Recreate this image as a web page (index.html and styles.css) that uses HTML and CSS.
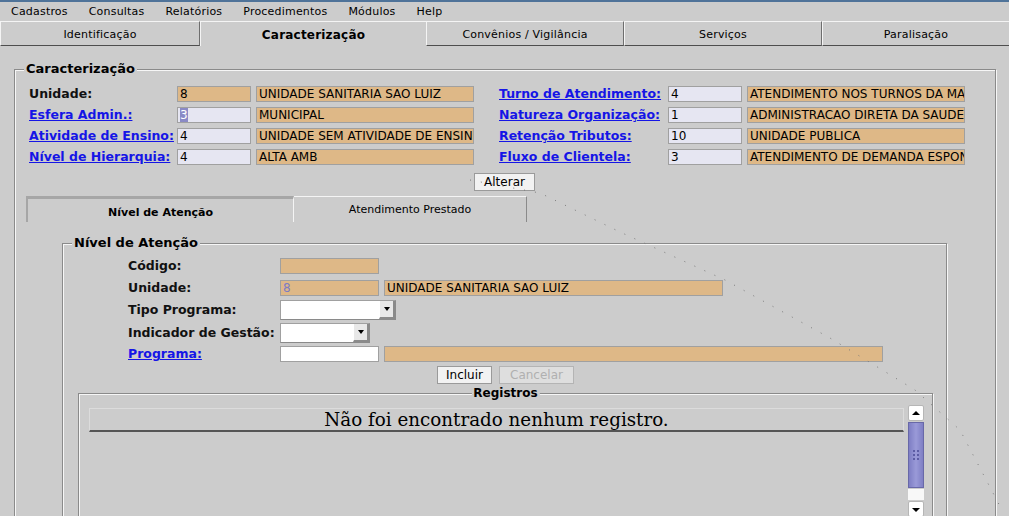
FILE: index.html
```html
<!DOCTYPE html>
<html lang="pt">
<head>
<meta charset="utf-8">
<title>Caracterização</title>
<link rel="stylesheet" href="styles.css">
</head>
<body>
<div class="topstrip"></div>
<nav class="menubar">
  <span>Cadastros</span><span>Consultas</span><span>Relatórios</span><span>Procedimentos</span><span>Módulos</span><span>Help</span>
</nav>
<div class="tabs">
  <div class="tab">Identificação</div>
  <div class="tab active">Caracterização</div>
  <div class="tab">Convênios / Vigilância</div>
  <div class="tab">Serviços</div>
  <div class="tab last">Paralisação</div>
</div>
<div class="main">
  <section class="group car">
    <span class="legend">Caracterização</span>
    <div class="cgrid">
      <span class="lbl">Unidade:</span><span class="fld tan">8</span><span class="fld tan">UNIDADE SANITARIA SAO LUIZ</span><span></span>
      <a class="lbl link">Turno de Atendimento:</a><span class="fld lav">4</span><span class="fld tan">ATENDIMENTO NOS TURNOS DA MANHA E A TARDE</span>

      <a class="lbl link">Esfera Admin.:</a><span class="fld lav"><span class="sel">3</span></span><span class="fld tan">MUNICIPAL</span><span></span>
      <a class="lbl link">Natureza Organização:</a><span class="fld lav">1</span><span class="fld tan">ADMINISTRACAO DIRETA DA SAUDE (MS, SES E SMS)</span>

      <a class="lbl link">Atividade de Ensino:</a><span class="fld lav">4</span><span class="fld tan">UNIDADE SEM ATIVIDADE DE ENSINO</span><span></span>
      <a class="lbl link">Retenção Tributos:</a><span class="fld lav">10</span><span class="fld tan">UNIDADE PUBLICA</span>

      <a class="lbl link">Nível de Hierarquia:</a><span class="fld lav">4</span><span class="fld tan">ALTA AMB</span><span></span>
      <a class="lbl link">Fluxo de Clientela:</a><span class="fld lav">3</span><span class="fld tan">ATENDIMENTO DE DEMANDA ESPONTANEA</span>
    </div>
    <div class="center"><button class="btn alt">Alterar</button></div>
    <div class="subtabs">
      <div class="stab active">Nível de Atenção</div>
      <div class="stab">Atendimento Prestado</div>
    </div>
    <section class="group nivel">
      <span class="legend">Nível de Atenção</span>
      <div class="ngrid">
        <span class="lbl">Código:</span>
        <div class="frow"><span class="fld tan w99"></span></div>

        <span class="lbl">Unidade:</span>
        <div class="frow"><span class="fld tan w99 caret">8</span><span class="fld tan w339">UNIDADE SANITARIA SAO LUIZ</span></div>

        <span class="lbl tall">Tipo Programa:</span>
        <div class="frow"><span class="select w116"><span class="arrow"></span></span></div>

        <span class="lbl tall">Indicador de Gestão:</span>
        <div class="frow"><span class="select w90"><span class="arrow"></span></span></div>

        <a class="lbl link">Programa:</a>
        <div class="frow"><span class="fld white w99"></span><span class="fld tan w499"></span></div>
      </div>
      <div class="center btnrow">
        <button class="btn inc">Incluir</button>
        <button class="btn can" disabled>Cancelar</button>
      </div>
      <section class="group reg">
        <span class="legend regl">Registros</span>
        <div class="regbody">
          <div class="thead">Não foi encontrado nenhum registro.</div>
          <div class="scroll">
            <span class="sbtn up"></span>
            <span class="thumb"><span class="grip"></span></span>
            <span class="track"></span>
            <span class="sbtn down"></span>
          </div>
        </div>
      </section>
    </section>
  </section>
</div>
<svg class="trail" width="1009" height="516" viewBox="0 0 1009 516">
  <polyline points="470,180 540,193 620,232 725,280 830,338 915,390 960,430 1003,512" fill="none" stroke="#7a7a7a" stroke-width="1" stroke-dasharray="1 10"/>
</svg>
</body>
</html>
```

FILE: styles.css
```css
* { box-sizing: border-box; }
html, body { margin: 0; padding: 0; }
body {
  width: 1009px;
  height: 516px;
  overflow: hidden;
  background: #cccccc;
  font-family: "DejaVu Sans", "Liberation Sans", sans-serif;
  color: #000;
  position: relative;
}
.topstrip { height: 2px; background: #4f7399; }
.menubar {
  height: 19px;
  display: flex;
  align-items: center;
  gap: 21px;
  padding-left: 11px;
  font-size: 11px;
  letter-spacing: 0.2px;
}
.tabs {
  display: grid;
  grid-template-columns: 200px 226px 198px 198px 1fr;
  height: 25px;
}
.tab {
  display: flex;
  align-items: center;
  justify-content: center;
  font-size: 11px;
  letter-spacing: 0.2px;
  border-top: 1px solid #f4f4f4;
  border-left: 1px solid #f4f4f4;
  border-right: 1px solid #6e6e6e;
  border-bottom: 1px solid #4e4e4e;
  padding-top: 1px;
}
.tab.active {
  border-bottom: none;
  border-right: none;
  font-weight: bold;
  font-size: 12px;
}
.tab.last { border-right: none; }

.main { padding-left: 14px; padding-top: 23px; }

.group {
  position: relative;
  border: 1px solid #8a8a8a;
  box-shadow: inset 1px 1px 0 #f6f6f6, 1px 1px 0 #f6f6f6;
}
.legend {
  position: absolute;
  top: -9px;
  left: 9px;
  padding: 0 2px;
  background: #cccccc;
  font-weight: bold;
  font-size: 13px;
  line-height: 16px;
}
.car {
  width: 982px;
  height: 470px;
  padding: 16px 0 0 0;
}
.cgrid {
  margin-left: 14px;
  display: grid;
  grid-template-columns: 143px 74px 218px 15px 164px 74px 218px;
  grid-auto-rows: 16px;
  column-gap: 5px;
  row-gap: 5px;
}
.lbl {
  font-weight: bold;
  font-size: 12.5px;
  line-height: 16px;
  white-space: nowrap;
  color: #111;
}
.link { color: #1515e6; text-decoration: underline; cursor: pointer; }
.fld {
  display: block;
  height: 16px;
  border: 1px solid #a0a0a0;
  font-size: 12px;
  line-height: 14px;
  padding-left: 2px;
  white-space: nowrap;
  overflow: hidden;
}
.tan { background: #deb887; }
.lav { background: #e6e6f2; }
.white { background: #ffffff; }
.sel { background: #8a8ac6; color: #fff; }
.caret { color: #7b7bc4; }

.center { display: flex; justify-content: center; gap: 7px; }
.btn {
  font-family: "DejaVu Sans", sans-serif;
  font-size: 12px;
  height: 18px;
  padding: 0;
  background: #f2f2f2;
  border: 1px solid #9a9a9a;
  color: #000;
  line-height: 15px;
}
.alt { width: 61px; margin-top: 8px; margin-right: 1px; }
.btnrow { margin-top: 4px; padding-left: 2px; }
.inc { width: 55px; }
.can { width: 75px; color: #b0b0b0; background: #dedede; border-color: #b4b4b4; }

.subtabs {
  display: flex;
  margin: 5px 0 0 11px;
  height: 26px;
}
.stab {
  display: flex;
  align-items: center;
  justify-content: center;
  font-size: 11px;
  border-top: 1px solid #f4f4f4;
  border-right: 1px solid #8a8a8a;
  width: 233px;
}
.stab.active {
  width: 268px;
  font-weight: bold;
  border-top: 3px solid #a6a6a6;
  border-left: 2px solid #a6a6a6;
  border-right: 1px solid #f4f4f4;
  padding-top: 3px;
}

.nivel {
  margin: 21px 0 0 47px;
  width: 885px;
  height: 320px;
  padding: 14px 0 0 0;
}
.ngrid {
  margin-left: 65px;
  display: grid;
  grid-template-columns: 152px 1fr;
  grid-template-rows: 22px 20px 23px 23px 16px;
  align-items: start;
}
.ngrid .lbl { font-size: 12.5px; }
.ngrid .lbl.tall { line-height: 20px; }
.frow { display: flex; gap: 5px; }
.w99 { width: 99px; }
.w339 { width: 339px; }
.w499 { width: 499px; }
.w116 { width: 116px; }
.w90 { width: 90px; }
.select {
  display: flex;
  justify-content: flex-end;
  height: 20px;
  background: #ffffff;
  border-top: 1px solid #a0a0a0;
  border-left: 1px solid #a0a0a0;
  border-right: 1px solid #8a8a8a;
  border-bottom: 1px solid #8a8a8a;
}
.arrow {
  width: 16px;
  height: 18px;
  background: #e8e8e8;
  border-left: 1px solid #fff;
  border-right: 2px solid #8a8a8a;
  border-bottom: 2px solid #8a8a8a;
  position: relative;
}
.arrow::after {
  content: "";
  position: absolute;
  left: 4px;
  top: 6px;
  border-left: 3px solid transparent;
  border-right: 3px solid transparent;
  border-top: 4px solid #000;
}

.reg {
  margin: 9px 0 0 15px;
  width: 855px;
  height: 160px;
  padding: 14px 0 0 10px;
}
.regl {
  left: 50%;
  transform: translateX(-50%);
  font-size: 12px;
  line-height: 14px;
  top: -8px;
}
.regbody { display: flex; align-items: flex-start; gap: 4px; }
.thead {
  width: 815px;
  height: 24px;
  border-top: 1px solid #dcdcdc;
  border-left: 1px solid #dcdcdc;
  border-right: 1px solid #dcdcdc;
  border-bottom: 2px solid #555;
  font-family: "DejaVu Serif", "Liberation Serif", serif;
  font-size: 18.3px;
  line-height: 22px;
  text-align: center;
}
.scroll {
  margin-top: -3px;
  width: 16px;
  display: flex;
  flex-direction: column;
  gap: 1px;
}
.sbtn {
  display: block;
  height: 16px;
  background: #fff;
  border: 1px solid #b6b6b6;
  border-radius: 2px;
  position: relative;
}
.sbtn::after {
  content: "";
  position: absolute;
  left: 3px;
  border-left: 4px solid transparent;
  border-right: 4px solid transparent;
}
.up::after { top: 5px; border-bottom: 4px solid #000; }
.down::after { top: 6px; border-top: 4px solid #000; }
.thumb {
  display: flex;
  align-items: center;
  justify-content: center;
  height: 66px;
  background: linear-gradient(90deg, #7e7ec4, #9a9ad8 50%, #7e7ec4);
  border: 1px solid #6868a8;
}
.grip {
  width: 8px;
  height: 12px;
  background-image: radial-gradient(circle, #5c5ca4 1px, transparent 1.3px);
  background-size: 4px 4px;
}
.track { display: block; height: 11px; background: #f8f8f8; }

.trail {
  position: absolute;
  left: 0;
  top: 0;
  pointer-events: none;
}
```
